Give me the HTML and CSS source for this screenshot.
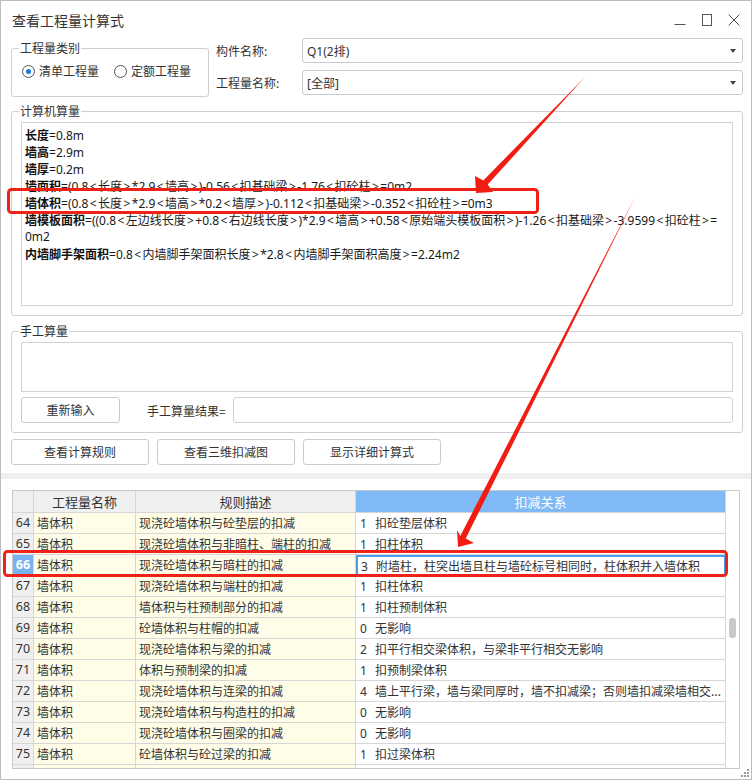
FILE: index.html
```html
<!DOCTYPE html>
<html lang="zh-CN">
<head>
<meta charset="utf-8">
<title>查看工程量计算式</title>
<link rel="stylesheet" href="styles.css">
</head>
<body>
<div class="win">
  <div class="titlebar">
    <span class="title">查看工程量计算式</span>
    <div class="wctl">
      <svg class="wico" width="12" height="12" viewBox="0 0 12 12"><path d="M0.5 10.5H11.5" stroke="#555" stroke-width="1" fill="none"/></svg>
      <svg class="wico" width="12" height="12" viewBox="0 0 12 12"><rect x="1.5" y="0.5" width="9" height="11" stroke="#555" stroke-width="1" fill="none"/></svg>
      <svg class="wico" width="12" height="12" viewBox="0 0 12 12"><path d="M0.5 0.5L11.5 11.5M11.5 0.5L0.5 11.5" stroke="#555" stroke-width="1" fill="none"/></svg>
    </div>
  </div>

  <div class="top">
    <fieldset class="grp grp-type">
      <legend>工程量类别</legend>
      <div class="radios">
        <span class="radio"><span class="rb on"></span>清单工程量</span>
        <span class="radio"><span class="rb"></span>定额工程量</span>
      </div>
    </fieldset>
    <div class="fields">
      <div class="frow"><span class="flabel">构件名称:</span><div class="combo"><span class="ctext">Q1(2排)</span><span class="caret"></span></div></div>
      <div class="frow"><span class="flabel">工程量名称:</span><div class="combo"><span class="ctext">[全部]</span><span class="caret"></span></div></div>
    </div>
  </div>

  <fieldset class="grp grp-calc">
    <legend>计算机算量</legend>
    <div class="calcwrap">
      <div class="calcbox">
        <div class="ln"><b>长度</b>=0.8m</div>
        <div class="ln"><b>墙高</b>=2.9m</div>
        <div class="ln"><b>墙厚</b>=0.2m</div>
        <div class="ln"><b>墙面积</b>=(0.8<i class="a">&lt;</i>长度<i class="a">&gt;</i>*2.9<i class="a">&lt;</i>墙高<i class="a">&gt;</i>)-0.56<i class="a">&lt;</i>扣基础梁<i class="a">&gt;</i>-1.76<i class="a">&lt;</i>扣砼柱<i class="a">&gt;</i>=0m2</div>
        <div class="ln"><b>墙体积</b>=(0.8<i class="a">&lt;</i>长度<i class="a">&gt;</i>*2.9<i class="a">&lt;</i>墙高<i class="a">&gt;</i>*0.2<i class="a">&lt;</i>墙厚<i class="a">&gt;</i>)-0.112<i class="a">&lt;</i>扣基础梁<i class="a">&gt;</i>-0.352<i class="a">&lt;</i>扣砼柱<i class="a">&gt;</i>=0m3</div>
        <div class="ln"><b>墙模板面积</b>=((0.8<i class="a">&lt;</i>左边线长度<i class="a">&gt;</i>+0.8<i class="a">&lt;</i>右边线长度<i class="a">&gt;</i>)*2.9<i class="a">&lt;</i>墙高<i class="a">&gt;</i>+0.58<i class="a">&lt;</i>原始端头模板面积<i class="a">&gt;</i>)-1.26<i class="a">&lt;</i>扣基础梁<i class="a">&gt;</i>-3.9599<i class="a">&lt;</i>扣砼柱<i class="a">&gt;</i>=</div>
        <div class="ln">0m2</div>
        <div class="ln"><b>内墙脚手架面积</b>=0.8<i class="a">&lt;</i>内墙脚手架面积长度<i class="a">&gt;</i>*2.8<i class="a">&lt;</i>内墙脚手架面积高度<i class="a">&gt;</i>=2.24m2</div>
      </div>
    </div>
  </fieldset>

  <fieldset class="grp grp-manual">
    <legend>手工算量</legend>
    <div class="manwrap">
      <div class="manbox"></div>
      <div class="mrow">
        <button class="btn btn-re">重新输入</button>
        <span class="mlabel">手工算量结果=</span>
        <div class="minput"></div>
      </div>
    </div>
  </fieldset>

  <div class="btnrow">
    <button class="btn btn-wide">查看计算规则</button>
    <button class="btn btn-wide">查看三维扣减图</button>
    <button class="btn btn-wide">显示详细计算式</button>
  </div>

  <div class="splitter"></div>

  <div class="grid">
    <div class="tbl">
      <div class="c h rn"></div><div class="c h">工程量名称</div><div class="c h">规则描述</div><div class="c h hsel">扣减关系</div>

      <div class="c rn">64</div><div class="c y">墙体积</div><div class="c y">现浇砼墙体积与砼垫层的扣减</div><div class="c w"><span class="k">1</span>扣砼垫层体积</div>
      <div class="c rn">65</div><div class="c y">墙体积</div><div class="c y">现浇砼墙体积与非暗柱、端柱的扣减</div><div class="c w"><span class="k">1</span>扣柱体积</div>
      <div class="c rn rsel">66</div><div class="c y">墙体积</div><div class="c y">现浇砼墙体积与暗柱的扣减</div><div class="c w focus"><span class="k">3</span>附墙柱，柱突出墙且柱与墙砼标号相同时，柱体积并入墙体积</div>
      <div class="c rn">67</div><div class="c y">墙体积</div><div class="c y">现浇砼墙体积与端柱的扣减</div><div class="c w"><span class="k">1</span>扣柱体积</div>
      <div class="c rn">68</div><div class="c y">墙体积</div><div class="c y">墙体积与柱预制部分的扣减</div><div class="c w"><span class="k">1</span>扣柱预制体积</div>
      <div class="c rn">69</div><div class="c y">墙体积</div><div class="c y">砼墙体积与柱帽的扣减</div><div class="c w"><span class="k">0</span>无影响</div>
      <div class="c rn">70</div><div class="c y">墙体积</div><div class="c y">现浇砼墙体积与梁的扣减</div><div class="c w"><span class="k">2</span>扣平行相交梁体积，与梁非平行相交无影响</div>
      <div class="c rn">71</div><div class="c y">墙体积</div><div class="c y">体积与预制梁的扣减</div><div class="c w"><span class="k">1</span>扣预制梁体积</div>
      <div class="c rn">72</div><div class="c y">墙体积</div><div class="c y">现浇砼墙体积与连梁的扣减</div><div class="c w"><span class="k">4</span>墙上平行梁，墙与梁同厚时，墙不扣减梁；否则墙扣减梁墙相交...</div>
      <div class="c rn">73</div><div class="c y">墙体积</div><div class="c y">现浇砼墙体积与构造柱的扣减</div><div class="c w"><span class="k">0</span>无影响</div>
      <div class="c rn">74</div><div class="c y">墙体积</div><div class="c y">现浇砼墙体积与圈梁的扣减</div><div class="c w"><span class="k">0</span>无影响</div>
      <div class="c rn">75</div><div class="c y">墙体积</div><div class="c y">砼墙体积与砼过梁的扣减</div><div class="c w"><span class="k">1</span>扣过梁体积</div>
      <div class="c rn"></div><div class="c y"></div><div class="c y"></div><div class="c w"></div>
    </div>
    <div class="vscroll"><div class="thumb"></div></div>
  </div>

  <svg class="grip" width="10" height="10" viewBox="0 0 10 10">
    <rect x="7" y="1" width="2" height="2" fill="#999"/>
    <rect x="4" y="4" width="2" height="2" fill="#999"/>
    <rect x="7" y="4" width="2" height="2" fill="#999"/>
    <rect x="1" y="7" width="2" height="2" fill="#999"/>
    <rect x="4" y="7" width="2" height="2" fill="#999"/>
    <rect x="7" y="7" width="2" height="2" fill="#999"/>
  </svg>

  <svg class="annot" width="752" height="780" viewBox="0 0 752 780">
    <rect x="8.5" y="189.5" width="529" height="23" rx="3" fill="none" stroke="#ef2218" stroke-width="3"/>
    <rect x="4.5" y="551.5" width="722" height="24" rx="3" fill="none" stroke="#ef2218" stroke-width="3"/>
    <polygon points="476,193 475,176 483.3,180.5 585,77 487.7,184.6 493,192" fill="#f21d12"/>
    <polygon points="458,547 457,530 460.3,535.9 636.5,194.5 465.7,538.6 474,543" fill="#f21d12"/>
  </svg>
</div>
</body>
</html>
```

FILE: styles.css
```css
* {
  box-sizing: border-box;
}

html, body {
  margin: 0;
  padding: 0;
  background: #fff;
}

body {
  font-family: "Noto Sans", "Noto Sans CJK SC", sans-serif;
  font-size: 12px;
  color: #333;
}

.win {
  position: relative;
  width: 752px;
  height: 780px;
  border: 1px solid #bdbdbd;
  background: #fff;
  display: flex;
  flex-direction: column;
  overflow: hidden;
}

/* title bar */
.titlebar {
  height: 37px;
  flex: none;
  display: flex;
  align-items: center;
  padding: 0 11px 0 11px;
}

.title {
  flex: 1;
  font-size: 14px;
  line-height: 18px;
  color: #333;
  font-family: "Noto Sans CJK SC", sans-serif;
}

.wctl {
  display: flex;
  align-items: center;
  gap: 15px;
}

.wico {
  display: block;
}

/* group boxes */
.grp {
  margin: 0;
  padding: 0;
  border: 1px solid #cfcfcf;
  border-radius: 3px;
  min-width: 0;
}

.grp legend {
  margin-left: 7px;
  padding: 0 1px;
  font-size: 12px;
  line-height: 16px;
  color: #333;
  font-family: "Noto Sans CJK SC", sans-serif;
}

/* top section */
.top {
  flex: none;
  display: flex;
  align-items: flex-start;
  padding: 0 8px 0 10px;
}

.grp-type {
  width: 198px;
  margin-top: 2px;
  height: 57px;
}

.radios {
  display: flex;
  align-items: center;
  padding: 7px 0 0 10px;
  height: 23px;
}

.radio {
  display: flex;
  align-items: center;
  line-height: 16px;
  margin-right: 15px;
  font-family: "Noto Sans CJK SC", sans-serif;
}

.rb {
  width: 13px;
  height: 13px;
  border: 1px solid #555;
  border-radius: 50%;
  margin-right: 4px;
  display: flex;
  align-items: center;
  justify-content: center;
  background: #fff;
}

.rb.on::after {
  content: "";
  width: 5px;
  height: 5px;
  border-radius: 50%;
  background: #1b78dc;
}

.fields {
  flex: 1;
  margin-left: 7px;
  display: flex;
  flex-direction: column;
  gap: 7px;
}

.frow {
  display: flex;
  align-items: center;
  height: 25px;
}

.flabel {
  width: 86px;
  flex: none;
  font-family: "Noto Sans CJK SC", sans-serif;
  color: #333;
}

.combo {
  flex: 1;
  height: 25px;
  border: 1px solid #c9c9c9;
  border-radius: 3px;
  display: flex;
  align-items: center;
  padding: 0 4px;
}

.ctext {
  flex: 1;
  color: #333;
}

.caret {
  width: 0;
  height: 0;
  border-left: 3.5px solid transparent;
  border-right: 3.5px solid transparent;
  border-top: 4px solid #444;
  margin-right: 2px;
}

/* calc group */
.grp-calc {
  margin: 6px 8px 0 10px;
  flex: none;
}

.calcwrap {
  padding: 3px 9px 9px 9px;
}

.calcbox {
  height: 184px;
  border: 1px solid #d2d2d2;
  padding: 3px 0 0 3px;
  color: #1a1a1a;
}

.ln {
  line-height: 17px;
  height: 17px;
  white-space: nowrap;
}

.ln b {
  font-family: "Noto Sans CJK SC", sans-serif;
  font-weight: bold;
  color: #111;
}

.ln .a {
  font-style: normal;
  padding: 0 1.4px;
}

/* manual group */
.grp-manual {
  margin: 7px 8px 0 10px;
  flex: none;
}

.manwrap {
  padding: 3px 9px 9px 9px;
}

.manbox {
  height: 50px;
  border: 1px solid #d2d2d2;
}

.mrow {
  margin-top: 5px;
  display: flex;
  align-items: center;
  height: 26px;
}

.btn {
  font-family: "Noto Sans CJK SC", sans-serif;
  font-size: 12px;
  color: #333;
  background: #fff;
  border: 1px solid #cbcbcb;
  border-radius: 3px;
  height: 26px;
  padding: 0;
  line-height: 16px;
}

.btn-re {
  width: 99px;
}

.mlabel {
  width: 113px;
  padding-left: 27px;
  flex: none;
  font-family: "Noto Sans CJK SC", sans-serif;
}

.minput {
  flex: 1;
  height: 26px;
  border: 1px solid #d2d2d2;
  border-radius: 3px;
}

/* button row */
.btnrow {
  flex: none;
  display: flex;
  gap: 8px;
  margin: 6px 0 0 10px;
}

.btn-wide {
  width: 138px;
}

.splitter {
  flex: none;
  height: 6px;
  margin-top: 8px;
  background: #efefef;
}

/* grid */
.grid {
  flex: none;
  margin: 11px 0 0 11px;
  width: 728px;
  height: 279px;
  border: 1px solid #c8c8c8;
  display: flex;
  overflow: hidden;
}

.tbl {
  display: grid;
  grid-template-columns: 21px 102px 220px 370px;
  grid-template-rows: 22px;
  grid-auto-rows: 21px;
  align-content: start;
}

.c {
  border-right: 1px solid #d6d6d6;
  border-bottom: 1px solid #d6d6d6;
  line-height: 20px;
  white-space: nowrap;
  overflow: hidden;
  padding-left: 3px;
  font-family: "Noto Sans CJK SC", sans-serif;
  color: #333;
}

.c.h {
  height: 22px;
  line-height: 21px;
  background: #f0f0f0;
  text-align: center;
  padding-left: 0;
  font-size: 13px;
}

.c.hsel {
  background: #7fb9f6;
  color: #fff;
}

.c.rn {
  background: #f0f0f0;
  text-align: center;
  padding-left: 0;
  font-family: "Noto Sans", sans-serif;
  font-size: 12.5px;
}

.c.rsel {
  background: #77b3f1;
  color: #fff;
  font-weight: bold;
}

.c.y {
  background: #fffde7;
}

.c.w {
  background: #fff;
}

.c.focus {
  border: 2px solid #4e9ce8;
  line-height: 17px;
  padding-left: 2px;
}

.k {
  display: inline-block;
  width: 16px;
  padding-left: 1px;
  font-family: "Noto Sans", sans-serif;
}

.vscroll {
  flex: 1;
  background: #fff;
}

.thumb {
  width: 7px;
  height: 20px;
  margin: 127px 0 0 3px;
  background: #c9c9c9;
  border-radius: 3px;
}

.grip {
  position: absolute;
  right: 1px;
  bottom: 1px;
}

.annot {
  position: absolute;
  top: -1px;
  left: -1px;
  pointer-events: none;
}
```
